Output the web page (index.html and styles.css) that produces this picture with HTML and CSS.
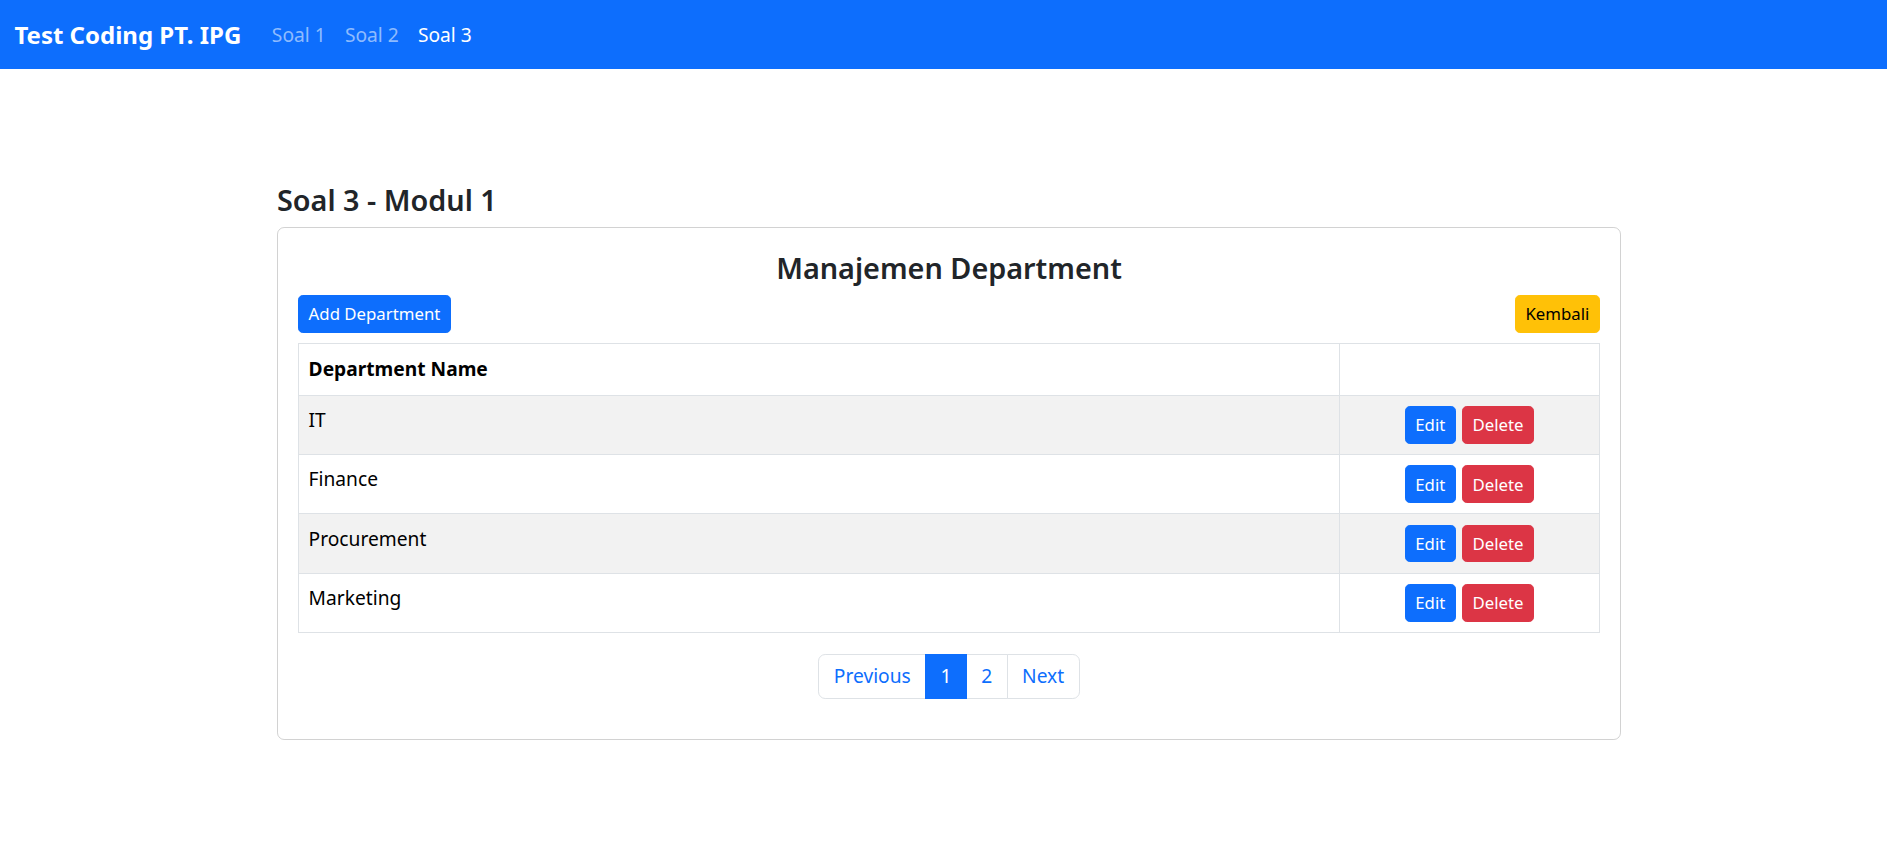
FILE: index.html
```html
<!DOCTYPE html>
<html lang="id">
<head>
<meta charset="utf-8">
<title>Soal 3 - Modul 1</title>
<link rel="stylesheet" href="styles.css">
</head>
<body>
<nav class="navbar">
  <a class="brand" href="#">Test Coding PT. IPG</a>
  <ul class="nav">
    <li><a class="nav-link" href="#">Soal 1</a></li>
    <li><a class="nav-link" href="#">Soal 2</a></li>
    <li><a class="nav-link active" href="#">Soal 3</a></li>
  </ul>
</nav>
<main class="container">
  <h4 class="page-title">Soal 3 - Modul 1</h4>
  <div class="card">
    <div class="card-body">
      <h4 class="card-title">Manajemen Department</h4>
      <div class="toolbar">
        <button class="btn btn-primary">Add Department</button>
        <button class="btn btn-warning">Kembali</button>
      </div>
      <table class="table">
        <colgroup><col class="col-name"><col class="col-actions"></colgroup>
        <thead>
          <tr><th>Department Name</th><th></th></tr>
        </thead>
        <tbody>
          <tr><td>IT</td><td class="actions"><div class="action-group"><button class="btn btn-primary">Edit</button><button class="btn btn-danger">Delete</button></div></td></tr>
          <tr><td>Finance</td><td class="actions"><div class="action-group"><button class="btn btn-primary">Edit</button><button class="btn btn-danger">Delete</button></div></td></tr>
          <tr><td>Procurement</td><td class="actions"><div class="action-group"><button class="btn btn-primary">Edit</button><button class="btn btn-danger">Delete</button></div></td></tr>
          <tr><td>Marketing</td><td class="actions"><div class="action-group"><button class="btn btn-primary">Edit</button><button class="btn btn-danger">Delete</button></div></td></tr>
        </tbody>
      </table>
      <nav class="pager">
        <ul class="pagination">
          <li><a class="page-link first" href="#">Previous</a></li>
          <li><a class="page-link active" href="#">1</a></li>
          <li><a class="page-link" href="#">2</a></li>
          <li><a class="page-link last" href="#">Next</a></li>
        </ul>
      </nav>
    </div>
  </div>
</main>
</body>
</html>
```

FILE: styles.css
```css
* { box-sizing: border-box; }

body {
  margin: 0;
  font-family: "Noto Sans", "Open Sans", sans-serif;
  font-size: 19.2px;
  line-height: 1.5;
  color: #212529;
  background: #fff;
}

.navbar {
  display: flex;
  align-items: center;
  height: 69px;
  padding: 0 14.4px;
  background: #0d6efd;
}

.brand {
  color: #fff;
  font-size: 24px;
  font-weight: 700;
  margin-right: 21px;
  text-decoration: none;
}

.nav {
  display: flex;
  list-style: none;
  margin: 0;
  padding: 0;
}

.nav-link {
  display: block;
  padding: 10.4px 9.6px 8.8px;
  color: rgba(255, 255, 255, 0.55);
  text-decoration: none;
}

.nav-link.active { color: #fff; }

.container {
  width: 1344px;
  margin-left: 277px;
  padding-top: 114px;
}

.page-title,
.card-title {
  margin: 0 0 9.6px;
  font-size: 28.8px;
  font-weight: 600;
  line-height: 1.2;
  color: #212529;
}

.card {
  border: 1px solid rgba(0, 0, 0, 0.175);
  border-radius: 7.2px;
}

.card-body { padding: 23px 20px 20.4px; }

.card-title { text-align: center; }

.toolbar {
  display: flex;
  justify-content: space-between;
  margin-bottom: 10px;
}

.btn {
  display: inline-flex;
  align-items: center;
  justify-content: center;
  height: 37.6px;
  padding: 0 9.6px;
  font-family: inherit;
  font-size: 16.8px;
  line-height: 1.5;
  border: 1px solid transparent;
  border-radius: 4.8px;
  cursor: pointer;
}

.btn-primary { background: #0d6efd; border-color: #0d6efd; color: #fff; }
.btn-warning { background: #ffc107; border-color: #ffc107; color: #000; }
.btn-danger { background: #dc3545; border-color: #dc3545; color: #fff; }

.table {
  width: 100%;
  border-collapse: collapse;
  margin-bottom: 20.5px;
  color: #000;
}

.col-name { width: 80%; }

.table th,
.table td {
  border: 1px solid #dee2e6;
  padding: 10.4px 9.6px;
  vertical-align: top;
  text-align: left;
  line-height: 28.8px;
}

.table th {
  font-weight: 700;
  padding-top: 11px;
  padding-bottom: 11px;
}

.table tbody tr:nth-child(odd) td { background: #f2f2f2; }

.action-group {
  display: flex;
  justify-content: center;
  gap: 6px;
}

.pagination {
  display: flex;
  justify-content: center;
  list-style: none;
  margin: 0 0 20px;
  padding: 0;
}

.page-link {
  display: block;
  padding: 7.2px 14.4px;
  margin-left: -1px;
  border: 1px solid #dee2e6;
  color: #0d6efd;
  text-decoration: none;
  line-height: 28.8px;
  background: #fff;
}

.page-link.first { margin-left: 0; border-radius: 7.2px 0 0 7.2px; }
.page-link.last { border-radius: 0 7.2px 7.2px 0; }

.page-link.active {
  background: #0d6efd;
  border-color: #0d6efd;
  color: #fff;
  position: relative;
}
```
